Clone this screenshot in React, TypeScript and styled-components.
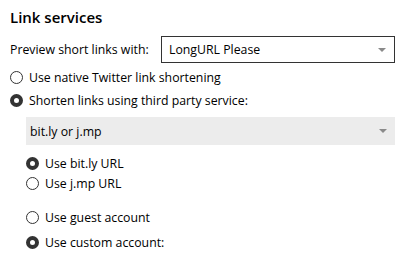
import React from 'react';
import styled, { createGlobalStyle } from 'styled-components';

const GlobalStyle = createGlobalStyle`
  body {
    margin: 0;
    background: #ffffff;
    font-family: "Open Sans", "Noto Sans", sans-serif;
    color: #000000;
  }
`;

const SPage = styled.div`
  width: 404px;
  height: 253px;
  padding: 6px 9px 0 10px;
  box-sizing: border-box;
  display: flex;
  flex-direction: column;
  overflow: hidden;
`;

const STitle = styled.h2`
  margin: 0;
  font-size: 15px;
  font-weight: 600;
  line-height: 22px;
`;

const SPreviewRow = styled.div`
  display: flex;
  align-items: center;
  margin-top: 8px;
  font-size: 12.3px;
`;

const SLabel = styled.span`
  width: 151px;
  flex-shrink: 0;
`;

const SSelect = styled.div<{ $filled?: boolean }>`
  flex: 1;
  display: flex;
  align-items: center;
  justify-content: space-between;
  height: ${(p) => (p.$filled ? '28px' : '27px')};
  box-sizing: border-box;
  padding: 0 8px 0 ${(p) => (p.$filled ? '4px' : '7px')};
  border: ${(p) => (p.$filled ? 'none' : '1px solid #333333')};
  background: ${(p) => (p.$filled ? '#ececec' : '#ffffff')};
  font-size: 12.3px;
`;

const SArrow = styled.span`
  width: 0;
  height: 0;
  border-left: 4px solid transparent;
  border-right: 4px solid transparent;
  border-top: 4px solid #8a8a8a;
`;

const SRadioRow = styled.label<{ $indent?: boolean; $top: number }>`
  display: flex;
  align-items: center;
  gap: 6px;
  height: 20px;
  margin-top: ${(p) => p.$top}px;
  padding-left: ${(p) => (p.$indent ? '16px' : '0')};
  font-size: 12.3px;
`;

const SDot = styled.span<{ $checked?: boolean }>`
  width: 13px;
  height: 13px;
  box-sizing: border-box;
  border-radius: 50%;
  flex-shrink: 0;
  border: ${(p) => (p.$checked ? '4px solid #333333' : '1px solid #333333')};
  background: #ffffff;
`;

const SSubBlock = styled.div`
  padding-left: 16px;
  margin-top: 7px;
  display: flex;
`;

type RadioProps = {
  label: string;
  checked?: boolean;
  indent?: boolean;
  top: number;
};

const Radio: React.FC<RadioProps> = ({ label, checked, indent, top }) => (
  <SRadioRow $indent={indent} $top={top}>
    <SDot $checked={checked} />
    <span>{label}</span>
  </SRadioRow>
);

export default function App() {
  return (
    <>
      <GlobalStyle />
      <SPage>
        <STitle>Link services</STitle>

        <SPreviewRow>
          <SLabel>Preview short links with:</SLabel>
          <SSelect>
            <span>LongURL Please</span>
            <SArrow />
          </SSelect>
        </SPreviewRow>

        <Radio label="Use native Twitter link shortening" top={4} />
        <Radio label="Shorten links using third party service:" checked top={3} />

        <SSubBlock>
          <SSelect $filled>
            <span>bit.ly or j.mp</span>
            <SArrow />
          </SSelect>
        </SSubBlock>

        <Radio label="Use bit.ly URL" checked indent top={8} />
        <Radio label="Use j.mp URL" indent top={0} />

        <Radio label="Use guest account" indent top={14} />
        <Radio label="Use custom account:" checked indent top={5} />
      </SPage>
    </>
  );
}
